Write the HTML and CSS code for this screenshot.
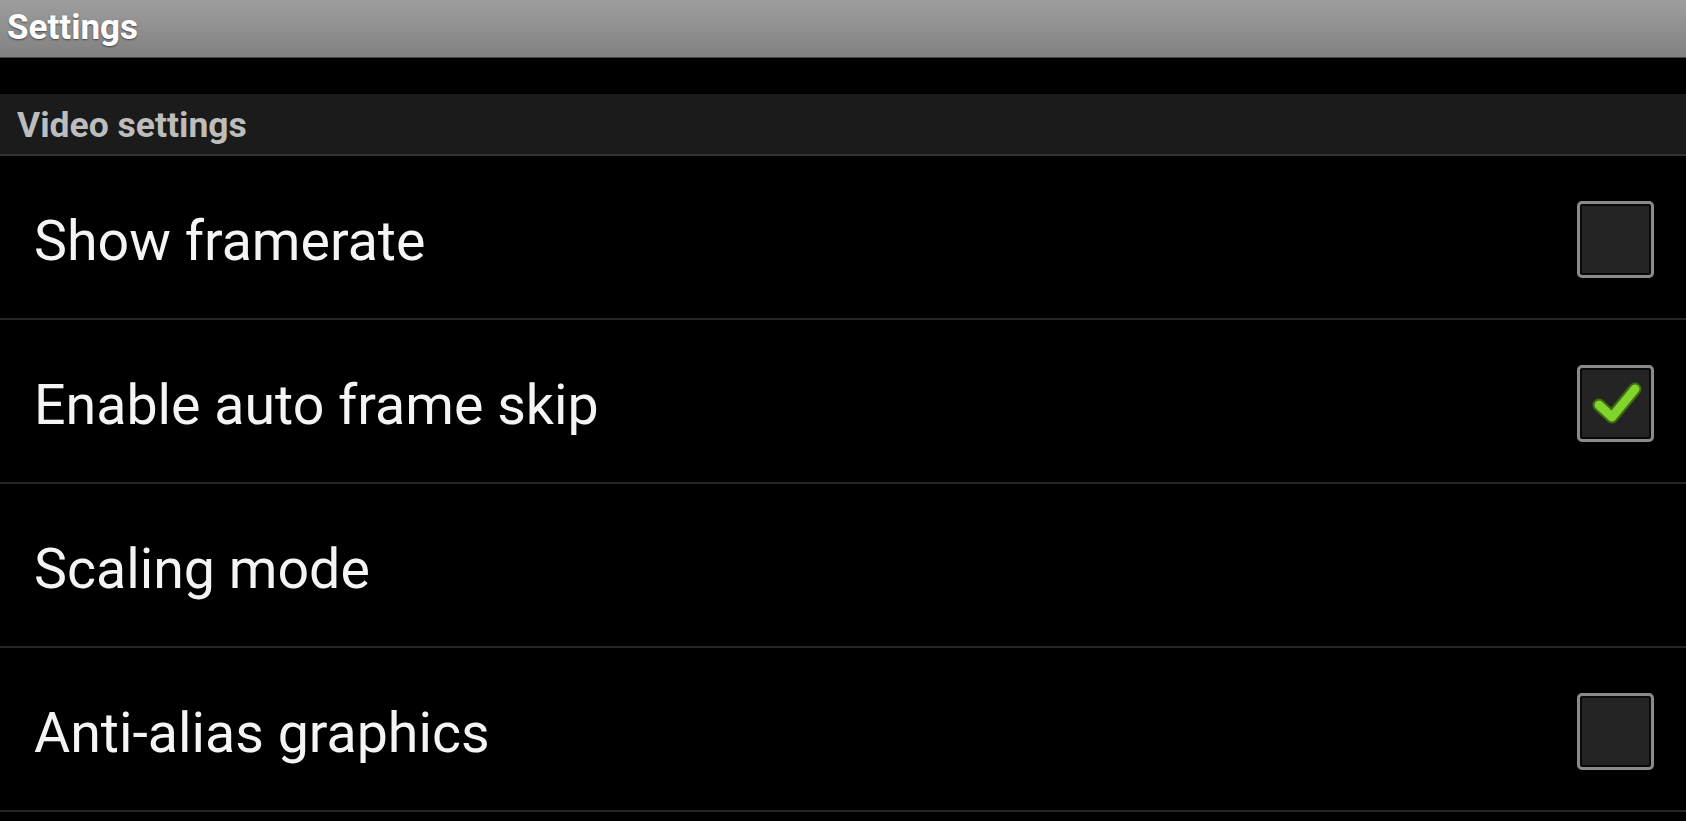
FILE: index.html
```html
<!DOCTYPE html>
<html lang="en">
<head>
    <title>Settings</title>
    <link rel="stylesheet" href="styles.css">
</head>
<body>

<header class="titlebar">
    <h1>Settings</h1>
</header>

<div class="spacer"></div>

<section class="category">
    <h2>Video settings</h2>
</section>

<ul class="prefs">
    <li class="pref">
        <span class="pref-title">Show framerate</span>
        <span class="checkbox"></span>
    </li>
    <li class="pref">
        <span class="pref-title">Enable auto frame skip</span>
        <span class="checkbox checked">
            <svg viewBox="0 0 71 71" width="71" height="71">
                <path d="M19 37 L32 49 L55 21" fill="none" stroke="#3d6a12" stroke-width="13" stroke-linecap="round" stroke-linejoin="round"/>
                <path d="M19 37 L32 49 L55 21" fill="none" stroke="#80d42c" stroke-width="9" stroke-linecap="round" stroke-linejoin="round"/>
            </svg>
        </span>
    </li>
    <li class="pref">
        <span class="pref-title">Scaling mode</span>
    </li>
    <li class="pref">
        <span class="pref-title">Anti-alias graphics</span>
        <span class="checkbox"></span>
    </li>
</ul>

</body>
</html>
```

FILE: styles.css
```css
body { margin: 0; padding: 0; background: #000; font-family: Roboto, "Noto Sans", sans-serif; overflow: hidden; }
.titlebar { height: 57px; background: linear-gradient(#9e9e9e, #818181); border-bottom: 1px solid #4a4a4a; display: flex; align-items: center; }
.titlebar h1 { margin: -3px 0 0 7px; font-size: 35px; font-weight: 700; color: #fff; text-shadow: 0 1px 2px rgba(0,0,0,0.5); }
.spacer { height: 36px; }
.category { height: 60px; background: #1b1b1b; border-bottom: 2px solid #333; display: flex; align-items: center; }
.category h2 { margin: 2px 0 0 17px; font-size: 35.5px; font-weight: 700; color: #bdbdbd; }
.prefs { list-style: none; margin: 0; padding: 0; }
.pref { height: 162px; border-bottom: 2px solid #262626; display: flex; align-items: center; justify-content: space-between; padding: 0 32px 0 34px; }
.pref-title { font-size: 55.5px; color: #f4f4f4; margin-top: 9px; }
.checkbox { width: 71px; height: 71px; margin-top: 5px; border: 3px solid #8a8a8a; border-radius: 5px; background: #242424; box-shadow: inset 0 0 0 2px #0a0a0a; display: flex; align-items: center; justify-content: center; }
```
